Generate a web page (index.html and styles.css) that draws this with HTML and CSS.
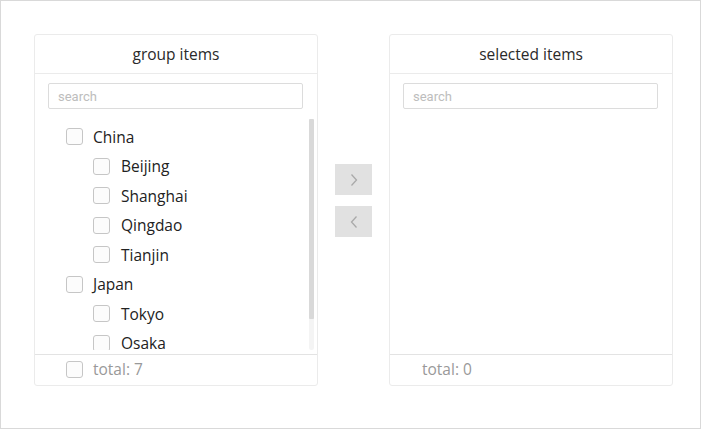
FILE: index.html
```html
<!DOCTYPE html>
<html>
<head>
<meta charset="utf-8">
<link rel="stylesheet" href="styles.css">
</head>
<body>
<div class="frame">
  <div class="panel">
    <div class="panel-header">group items</div>
    <div class="search-wrap"><input class="search" type="text" placeholder="search"></div>
    <div class="list">
      <div class="list-inner">
        <div class="row root"><span class="cb"></span><span class="label">China</span></div>
        <div class="row child"><span class="cb"></span><span class="label">Beijing</span></div>
        <div class="row child"><span class="cb"></span><span class="label">Shanghai</span></div>
        <div class="row child"><span class="cb"></span><span class="label">Qingdao</span></div>
        <div class="row child"><span class="cb"></span><span class="label">Tianjin</span></div>
        <div class="row root"><span class="cb"></span><span class="label">Japan</span></div>
        <div class="row child"><span class="cb"></span><span class="label">Tokyo</span></div>
        <div class="row child"><span class="cb"></span><span class="label">Osaka</span></div>
      </div>
      <div class="scrollbar"><div class="thumb"></div></div>
    </div>
    <div class="panel-footer"><span class="cb"></span><span class="total">total: 7</span></div>
  </div>
  <div class="actions">
    <button class="btn" type="button"><svg width="8" height="14" viewBox="0 0 8 14"><polyline points="1.5,1.5 6.5,7 1.5,12.5" fill="none" stroke="#a9a9a9" stroke-width="1.3"/></svg></button>
    <button class="btn" type="button"><svg width="8" height="14" viewBox="0 0 8 14"><polyline points="6.5,1.5 1.5,7 6.5,12.5" fill="none" stroke="#a9a9a9" stroke-width="1.3"/></svg></button>
  </div>
  <div class="panel">
    <div class="panel-header">selected items</div>
    <div class="search-wrap"><input class="search" type="text" placeholder="search"></div>
    <div class="list empty"></div>
    <div class="panel-footer plain"><span class="total">total: 0</span></div>
  </div>
</div>
</body>
</html>
```
FILE: styles.css
```css
html, body {
  margin: 0;
  padding: 0;
  background: #fff;
}
body {
  font-family: "Open Sans", "Noto Sans", sans-serif;
  color: #222;
}
.frame {
  box-sizing: border-box;
  width: 701px;
  height: 429px;
  border: 1px solid #d9d9d9;
  display: flex;
  align-items: flex-start;
  padding: 33px 0 0 33px;
}
.panel {
  box-sizing: border-box;
  width: 284px;
  height: 352px;
  border: 1px solid #ebebeb;
  border-radius: 3px;
  display: flex;
  flex-direction: column;
}
.panel-header {
  height: 38px;
  line-height: 38px;
  border-bottom: 1px solid #ebebeb;
  text-align: center;
  font-size: 15.5px;
  color: #2a2a2a;
}
.search-wrap {
  padding: 9px 14px 0 13px;
}
.search {
  box-sizing: border-box;
  display: block;
  width: 100%;
  height: 26px;
  border: 1px solid #dcdcdc;
  border-radius: 2px;
  padding: 1px 9px 0 9px;
  font-family: Roboto, "Liberation Sans", sans-serif;
  font-size: 13px;
  color: #333;
  outline: none;
}
.search::placeholder {
  color: #bdbdbd;
}
.list {
  position: relative;
  height: 231px;
  margin: 10px 3px 4px 0;
  overflow: hidden;
}
.scrollbar {
  position: absolute;
  top: 0;
  right: 0;
  width: 5px;
  height: 231px;
  background: #f4f4f4;
  border-radius: 3px;
}
.thumb {
  width: 5px;
  height: 200px;
  background: #d9d9d9;
  border-radius: 1px;
}
.list-inner {
  padding: 3px 0 0 0;
}
.row {
  height: 29.5px;
  display: flex;
  align-items: center;
  font-size: 15.5px;
}
.row.root {
  padding-left: 31px;
}
.row.child {
  padding-left: 58px;
}
.cb {
  box-sizing: border-box;
  width: 17px;
  height: 17px;
  border: 1px solid #c6c6c6;
  border-radius: 3px;
  background: #fcfcfc;
  flex: none;
}
.label {
  margin-left: 10px;
  color: #222;
}
.row.child .label {
  margin-left: 11px;
}
.panel-footer {
  flex: 1;
  border-top: 1px solid #e3e3e3;
  display: flex;
  align-items: center;
  padding-left: 31px;
  padding-bottom: 2px;
  font-size: 15.5px;
}
.panel-footer.plain {
  padding-left: 32px;
}
.total {
  color: #999;
  margin-left: 10px;
}
.panel-footer.plain .total {
  margin-left: 0;
}
.actions {
  display: flex;
  flex-direction: column;
  gap: 11px;
  margin: 130px 17px 0 17px;
}
.btn {
  width: 37px;
  height: 31px;
  border: none;
  padding: 0;
  background: #e1e1e1;
  display: flex;
  align-items: center;
  justify-content: center;
}
```
